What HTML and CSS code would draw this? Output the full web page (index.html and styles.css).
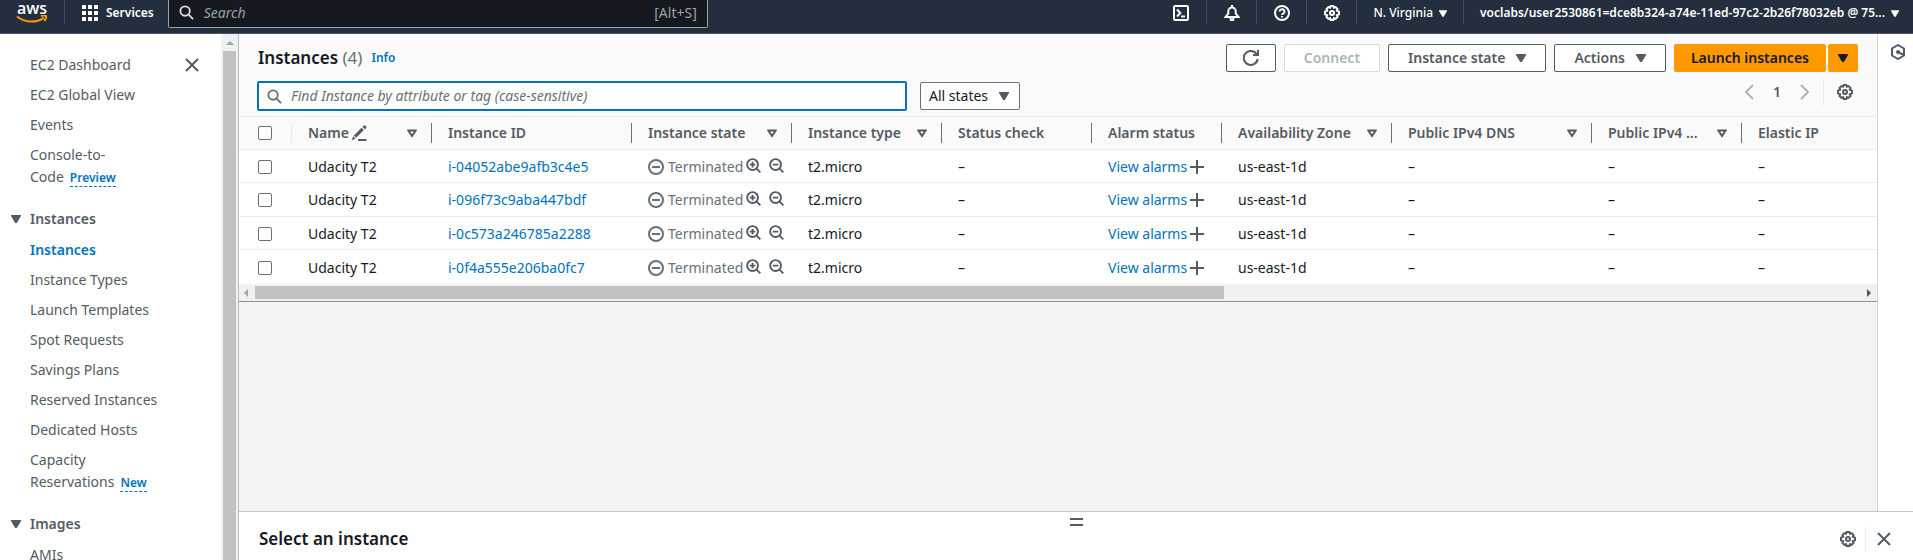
FILE: index.html
```html
<!DOCTYPE html>
<html lang="en">
<head>
<meta charset="utf-8">
<title>Instances | EC2</title>
<link rel="stylesheet" href="styles.css">
</head>
<body>
<svg class="sprite" aria-hidden="true">
  <symbol id="i-search" viewBox="0 0 16 16"><circle cx="6.5" cy="6.5" r="5" /><path d="M10.3 10.3 15 15"/></symbol>
  <symbol id="i-zoomin" viewBox="0 0 16 16"><circle cx="7" cy="7" r="5.8"/><path d="M11 11l4.300 4.300M4 7h6M7 4v6"/></symbol>
  <symbol id="i-zoomout" viewBox="0 0 16 16"><circle cx="7" cy="7" r="5.800"/><path d="M11 11l4.300 4.300M4 7h6"/></symbol>
  <symbol id="i-minus" viewBox="0 0 16 16"><circle cx="8" cy="8" r="7"/><path d="M4 8h8"/></symbol>
  <symbol id="i-plus" viewBox="0 0 16 16"><path d="M8 1v14M1 8h14"/></symbol>
  <symbol id="i-close" viewBox="0 0 16 16"><path d="M2 2l12 12M14 2L2 14"/></symbol>
  <symbol id="i-sort" viewBox="0 0 10 9"><path d="M1.300 1.500h7.400L5 7z"/></symbol>
  <symbol id="i-down" viewBox="0 0 10 8"><path class="solid" d="M0 0h10v1L5.800 8H4.200L0 1z"/></symbol>
  <symbol id="i-edit" viewBox="0 0 16 16"><path class="solid" d="M.6 15.400l1.600-4.200 2.400 2.300zM2.900 10.400l7.600-7.600 2.300 2.300-7.600 7.600zM11.500 1.900 12.900.500q.6-.5 1.200 0l1.200 1.200q.5.600 0 1.200L13.900 4.300z"/><path d="M7 15h8.500"/></symbol>
  <symbol id="i-gear" viewBox="0 0 16 16"><path d="M6.700 1h2.600l.6 1.700 1.700-.6 1.900 1.900-.7 1.700 2.200 1v2.600l-2.200.9.700 1.800-1.900 1.900-1.700-.7L9.300 15H6.700l-.6-1.800-1.700.7L2.500 12l.7-1.800L1 9.300V6.700l2.200-1L2.500 4l1.900-1.900 1.700.6z"/><circle cx="8" cy="8" r="2"/></symbol>
  <symbol id="i-refresh" viewBox="0 0 16 16"><path d="M14.700 9A7 7 0 1 1 13.600 4M15 0v5h-5"/></symbol>
  <symbol id="i-left" viewBox="0 0 9 16"><path d="M8 1L1 8l7 7"/></symbol>
  <symbol id="i-right" viewBox="0 0 9 16"><path d="M1 1l7 7-7 7"/></symbol>
  <symbol id="i-shell" viewBox="0 0 16 16"><rect x="1" y="1" width="14" height="14" rx="1"/><path d="M4 4.500 7.300 8 4 11.500M8 11.500h4"/></symbol>
  <symbol id="i-bell" viewBox="0 0 16 16"><path d="M8 0v2M1.500 12 4.300 8.500V6.200a3.700 3.700 0 0 1 7.400 0v2.300l2.800 3.500zM6.200 12.500 7 15h2l.8-2.500"/></symbol>
  <symbol id="i-help" viewBox="0 0 16 16"><circle cx="8" cy="8" r="7"/><path d="M5.500 6.500a2.500 2.300 0 1 1 4 1.900Q8 9 8 10M8 10.900v1.700"/></symbol>
  <symbol id="i-hex" viewBox="0 0 16 16"><path d="M8 1l6 3.500v7L8 15l-6-3.500v-7zM8 8l5.500 2.800"/><circle class="solid" cx="8" cy="8" r="2"/></symbol>
  <symbol id="i-apps" viewBox="0 0 16 16"><path class="solid" d="M0 0h4v4H0zM6 0h4v4H6zM12 0h4v4h-4zM0 6h4v4H0zM6 6h4v4H6zM12 6h4v4h-4zM0 12h4v4H0zM6 12h4v4H6zM12 12h4v4h-4z"/></symbol>
</svg>

<header class="topbar">
  <a class="logo" href="#" aria-label="AWS home">
    <span class="logo-text">aws</span>
    <svg class="logo-smile" viewBox="0 0 32 8"><path d="M1 1.500C9 8 20 8 28 2.800" /><path d="M25 1c2.500-.6 4.500-.5 5 0s0 3-1.500 5"/></svg>
  </a>
  <button class="services"><svg class="icon"><use href="#i-apps"/></svg>Services</button>
  <label class="global-search">
    <svg class="icon"><use href="#i-search"/></svg>
    <input type="search" placeholder="Search" aria-label="Search">
    <span>[Alt+S]</span>
  </label>
  <nav class="tools">
    <button aria-label="CloudShell"><svg class="icon"><use href="#i-shell"/></svg></button>
    <button aria-label="Notifications"><svg class="icon"><use href="#i-bell"/></svg></button>
    <button aria-label="Help"><svg class="icon"><use href="#i-help"/></svg></button>
    <button aria-label="Settings"><svg class="icon"><use href="#i-gear"/></svg></button>
    <button class="region">N. Virginia<svg class="caret small"><use href="#i-down"/></svg></button>
    <button class="account">voclabs/user2530861=dce8b324-a74e-11ed-97c2-2b26f78032eb @ 75...<svg class="caret small"><use href="#i-down"/></svg></button>
  </nav>
</header>

<div class="shell">
  <aside class="sidebar">
    <nav class="side-nav">
      <button class="side-close" aria-label="Close navigation"><svg class="icon"><use href="#i-close"/></svg></button>
      <ul>
        <li><a href="#">EC2 Dashboard</a></li>
        <li><a href="#">EC2 Global View</a></li>
        <li><a href="#">Events</a></li>
        <li><a href="#">Console-to-<br>Code</a><button class="tag">Preview</button></li>
      </ul>
      <button class="section"><svg class="caret"><use href="#i-down"/></svg>Instances</button>
      <ul>
        <li><a class="current" href="#">Instances</a></li>
        <li><a href="#">Instance Types</a></li>
        <li><a href="#">Launch Templates</a></li>
        <li><a href="#">Spot Requests</a></li>
        <li><a href="#">Savings Plans</a></li>
        <li><a href="#">Reserved Instances</a></li>
        <li><a href="#">Dedicated Hosts</a></li>
        <li><a href="#">Capacity<br>Reservations</a><button class="tag">New</button></li>
      </ul>
      <button class="section"><svg class="caret"><use href="#i-down"/></svg>Images</button>
      <ul>
        <li><a href="#">AMIs</a></li>
      </ul>
    </nav>
    <div class="vscroll"><i class="arrow up"></i><i class="vthumb"></i></div>
  </aside>

  <div class="work">
    <div class="upper">
      <main class="content">
        <section class="toolbar">
          <div class="title-row">
            <h1>Instances <span>(4)</span></h1>
            <a class="info" href="#">Info</a>
            <div class="actions">
              <button class="btn refresh" aria-label="Refresh"><svg class="icon"><use href="#i-refresh"/></svg></button>
              <button class="btn" disabled>Connect</button>
              <button class="btn">Instance state<svg class="caret"><use href="#i-down"/></svg></button>
              <button class="btn">Actions<svg class="caret"><use href="#i-down"/></svg></button>
              <div class="split">
                <button class="btn primary">Launch instances</button>
                <button class="btn primary more" aria-label="More launch options"><svg class="caret"><use href="#i-down"/></svg></button>
              </div>
            </div>
          </div>
          <div class="filter-row">
            <label class="filter">
              <svg class="icon"><use href="#i-search"/></svg>
              <input type="text" placeholder="Find Instance by attribute or tag (case-sensitive)" aria-label="Find Instance">
            </label>
            <div class="select">
              <select aria-label="State"><option>All states</option></select>
              <svg class="caret"><use href="#i-down"/></svg>
            </div>
            <div class="pager">
              <button class="dim" aria-label="Previous page"><svg class="chev"><use href="#i-left"/></svg></button>
              <button class="page">1</button>
              <button class="dim" aria-label="Next page"><svg class="chev"><use href="#i-right"/></svg></button>
              <button class="prefs" aria-label="Preferences"><svg class="icon"><use href="#i-gear"/></svg></button>
            </div>
          </div>
        </section>

        <table class="grid">
          <colgroup><col class="w-check"><col class="w-140"><col class="w-200"><col class="w-160"><col class="w-150"><col class="w-150"><col class="w-130"><col class="w-170"><col class="w-200"><col class="w-150"><col></colgroup>
          <thead>
            <tr>
              <th class="check"><div><input type="checkbox" aria-label="Select all"></div></th>
              <th><div>Name<svg class="icon edit"><use href="#i-edit"/></svg><svg class="sort"><use href="#i-sort"/></svg></div></th>
              <th><div>Instance ID</div></th>
              <th><div>Instance state<svg class="sort"><use href="#i-sort"/></svg></div></th>
              <th><div>Instance type<svg class="sort"><use href="#i-sort"/></svg></div></th>
              <th><div>Status check</div></th>
              <th><div>Alarm status</div></th>
              <th><div>Availability Zone<svg class="sort"><use href="#i-sort"/></svg></div></th>
              <th><div>Public IPv4 DNS<svg class="sort"><use href="#i-sort"/></svg></div></th>
              <th><div>Public IPv4 ...<svg class="sort"><use href="#i-sort"/></svg></div></th>
              <th class="last"><div>Elastic IP</div></th>
            </tr>
          </thead>
          <tbody>
            <tr>
              <td class="check"><input type="checkbox" aria-label="Select i-04052abe9afb3c4e5"></td>
              <td>Udacity T2</td><td><a href="#">i-04052abe9afb3c4e5</a></td>
              <td><div class="status"><svg class="icon"><use href="#i-minus"/></svg><span>Terminated</span><button aria-label="Include"><svg class="icon"><use href="#i-zoomin"/></svg></button><button aria-label="Exclude"><svg class="icon"><use href="#i-zoomout"/></svg></button></div></td>
              <td>t2.micro</td><td>–</td>
              <td><div class="alarm"><a href="#">View alarms</a><button aria-label="Add alarm"><svg class="icon"><use href="#i-plus"/></svg></button></div></td>
              <td>us-east-1d</td><td>–</td><td>–</td><td>–</td>
            </tr>
            <tr>
              <td class="check"><input type="checkbox" aria-label="Select i-096f73c9aba447bdf"></td>
              <td>Udacity T2</td><td><a href="#">i-096f73c9aba447bdf</a></td>
              <td><div class="status"><svg class="icon"><use href="#i-minus"/></svg><span>Terminated</span><button aria-label="Include"><svg class="icon"><use href="#i-zoomin"/></svg></button><button aria-label="Exclude"><svg class="icon"><use href="#i-zoomout"/></svg></button></div></td>
              <td>t2.micro</td><td>–</td>
              <td><div class="alarm"><a href="#">View alarms</a><button aria-label="Add alarm"><svg class="icon"><use href="#i-plus"/></svg></button></div></td>
              <td>us-east-1d</td><td>–</td><td>–</td><td>–</td>
            </tr>
            <tr>
              <td class="check"><input type="checkbox" aria-label="Select i-0c573a246785a2288"></td>
              <td>Udacity T2</td><td><a href="#">i-0c573a246785a2288</a></td>
              <td><div class="status"><svg class="icon"><use href="#i-minus"/></svg><span>Terminated</span><button aria-label="Include"><svg class="icon"><use href="#i-zoomin"/></svg></button><button aria-label="Exclude"><svg class="icon"><use href="#i-zoomout"/></svg></button></div></td>
              <td>t2.micro</td><td>–</td>
              <td><div class="alarm"><a href="#">View alarms</a><button aria-label="Add alarm"><svg class="icon"><use href="#i-plus"/></svg></button></div></td>
              <td>us-east-1d</td><td>–</td><td>–</td><td>–</td>
            </tr>
            <tr>
              <td class="check"><input type="checkbox" aria-label="Select i-0f4a555e206ba0fc7"></td>
              <td>Udacity T2</td><td><a href="#">i-0f4a555e206ba0fc7</a></td>
              <td><div class="status"><svg class="icon"><use href="#i-minus"/></svg><span>Terminated</span><button aria-label="Include"><svg class="icon"><use href="#i-zoomin"/></svg></button><button aria-label="Exclude"><svg class="icon"><use href="#i-zoomout"/></svg></button></div></td>
              <td>t2.micro</td><td>–</td>
              <td><div class="alarm"><a href="#">View alarms</a><button aria-label="Add alarm"><svg class="icon"><use href="#i-plus"/></svg></button></div></td>
              <td>us-east-1d</td><td>–</td><td>–</td><td>–</td>
            </tr>
          </tbody>
        </table>
        <div class="hscroll"><i class="arrow left"></i><div class="htrack"><i class="hthumb"></i></div><i class="arrow right"></i></div>
      </main>
      <aside class="rail"><button aria-label="Open tools"><svg class="icon"><use href="#i-hex"/></svg></button></aside>
    </div>
    <section class="panel">
      <div class="handle"></div>
      <div class="panel-row">
        <h2>Select an instance</h2>
        <button aria-label="Panel preferences"><svg class="icon"><use href="#i-gear"/></svg></button>
        <button class="panel-close" aria-label="Close panel"><svg class="icon"><use href="#i-close"/></svg></button>
      </div>
    </section>
  </div>
</div>
</body>
</html>
```

FILE: styles.css
```css
* { box-sizing: border-box; }

body {
  margin: 0;
  height: 100vh;
  display: flex;
  flex-direction: column;
  overflow: hidden;
  background: #fff;
  color: #16191f;
  font: 14px/22px "Noto Sans", "Open Sans", sans-serif;
}

button, input, select { font: inherit; color: inherit; }
button { display: flex; align-items: center; padding: 0; border: 0; background: none; }
a { color: #0073bb; text-decoration: none; }
h1, h2 { margin: 0; font-size: 17px; line-height: 22px; font-weight: 600; }
ul { margin: 0; padding: 0; list-style: none; }

.sprite { position: absolute; width: 0; height: 0; }
.icon, .chev, .sort, .logo-smile { fill: none; stroke: currentColor; stroke-width: 2; flex: none; }
.icon { width: 16px; height: 16px; }
.chev { width: 9px; height: 16px; }
.sort { width: 10px; height: 9px; }
.caret { width: 10px; height: 8px; flex: none; fill: currentColor; }
.caret.small { width: 8px; height: 7px; }
.solid { fill: currentColor; stroke: none; }

/* Top bar */
.topbar {
  flex: none;
  display: flex;
  align-items: flex-start;
  height: 34px;
  background: #232f3e;
  border-bottom: 1px solid #4f5766;
  color: #fff;
  font-size: 12px;
  font-weight: 600;
}
.logo {
  display: flex;
  flex-direction: column;
  align-items: center;
  width: 65px;
  height: 24px;
  border-right: 1px solid #414d5c;
  color: #fff;
}
.logo-text { font: 600 16px/17px "Open Sans", sans-serif; }
.logo-smile { width: 32px; height: 8px; margin-top: -2px; color: #ff9900; }
.services { gap: 8px; height: 26px; margin-left: 17px; }
.global-search {
  display: flex;
  align-items: center;
  gap: 10px;
  width: 540px;
  height: 28px;
  margin-left: 14px;
  padding: 0 10px 2px;
  background: #16191f;
  border: 1px solid #95a5a6;
  border-top: 0;
  border-radius: 0 0 2px 2px;
  color: #95a5a6;
  font-size: 14px;
  font-weight: 400;
}
.global-search .icon { color: #d5dbdb; width: 15px; height: 15px; }
.global-search input { flex: 1; min-width: 0; border: 0; padding: 0; background: none; outline: 0; }
.global-search input::placeholder { color: #95a5a6; font-style: italic; }
.tools { display: flex; margin-left: auto; }
.tools button { justify-content: center; width: 50px; height: 24px; padding-top: 2px; border-left: 1px solid #414d5c; }
.tools button:first-child { border-left: 0; }
.tools .region { width: auto; padding: 2px 16px 0; gap: 6px; font-weight: 500; }
.tools .account { width: auto; padding: 2px 14px 0 16px; gap: 6px; font-weight: 600; }

/* Sidebar */
.shell { flex: 1; min-height: 0; display: flex; }
.sidebar { flex: none; display: flex; width: 239px; border-right: 1px solid #b7bec0; color: #545b64; overflow: hidden; }
.side-nav { flex: 1; position: relative; padding: 20px 0 0 30px; }
.side-close { position: absolute; top: 23px; right: 21px; color: #545b64; }
.side-nav li { margin-bottom: 8px; }
.side-nav a { color: #545b64; }
.side-nav a.current { color: #0073bb; font-weight: 600; }
.side-nav .tag { display: inline-block; margin-left: 6px; border-bottom: 1px dashed #0073bb; color: #0073bb; font-size: 12px; line-height: 16px; font-weight: 600; }
.section { gap: 9px; margin: 20px 0 9px -19px; font-weight: 600; line-height: 22px; }
.vscroll { width: 17px; display: flex; flex-direction: column; align-items: center; background: #f0f0f0; }
.vthumb { flex: 1; width: 13px; margin-top: 6px; background: #c1c1c1; }
.arrow { flex: none; width: 0; height: 0; border: 4px solid transparent; }
.arrow.up { margin-top: 3px; border-bottom-color: #a3a3a3; }
.arrow.left { margin-right: 7px; border-right-color: #a3a3a3; }
.arrow.right { margin-left: 7px; border-left-color: #505050; }

/* Work area */
.work { flex: 1; min-width: 0; display: flex; flex-direction: column; }
.upper { flex: 1; min-height: 0; display: flex; }
.content { flex: 1; min-width: 0; background: #f2f3f3; border-right: 1px solid #d0d5d5; }
.rail { width: 35px; display: flex; justify-content: center; align-items: flex-start; padding: 10px 0 0 5px; color: #545b64; }

.toolbar { padding: 10px 19px 5px 18px; background: #fafafa; border-bottom: 1px solid #eaeded; }
.title-row, .actions, .split, .pager { display: flex; align-items: center; }
h1 span { color: #687078; font-weight: 400; }
.title-row { padding-left: 1px; }
.info { margin-left: 9px; font-size: 12px; font-weight: 600; }
.actions { gap: 8px; margin-left: auto; color: #545b64; }
.btn {
  gap: 11px;
  height: 28px;
  padding: 0 19px;
  background: #fff;
  border: 1px solid #545b64;
  border-radius: 2px;
  font-weight: 600;
  white-space: nowrap;
}
.btn:disabled { border-color: #d5dbdb; color: #aab7b8; }
.btn.refresh { padding: 0 16px; }
.split { gap: 2px; }
.btn.primary { padding: 0 16px; background: #ff9900; border-color: #ff9900; color: #16191f; }
.btn.more { padding: 0 9px; }
.filter-row { display: flex; align-items: flex-end; height: 33px; margin-top: 6px; }
.filter {
  display: flex;
  align-items: center;
  gap: 9px;
  width: 650px;
  height: 30px;
  padding: 0 8px;
  background: #fff;
  border: 2px solid #0073bb;
  border-radius: 2px;
  color: #687078;
}
.filter .icon { width: 15px; height: 15px; }
.filter input { flex: 1; min-width: 0; padding: 0; border: 0; outline: 0; background: none; }
.filter input::placeholder { color: #687078; font-style: italic; }
.select { display: grid; align-items: center; margin: 0 0 1px 13px; }
.select > * { grid-area: 1 / 1; }
.select select { appearance: none; width: 100px; height: 28px; padding: 0 8px; background: #fff; border: 1px solid #687078; border-radius: 2px; }
.select .caret { justify-self: end; margin-right: 11px; color: #545b64; pointer-events: none; }
.pager { align-self: flex-start; margin: 0 5px 0 auto; color: #545b64; }
.pager .dim { color: #aab7b8; }
.pager .page { justify-content: center; width: 46px; font-weight: 600; }
.prefs { height: 28px; margin-left: 14px; padding-left: 13px; border-left: 1px solid #eaeded; }

/* Instances table */
.grid { width: 100%; table-layout: fixed; border-collapse: separate; border-spacing: 0; background: #fff; }
.w-check { width: 53px; }
.w-130 { width: 130px; }
.w-140 { width: 140px; }
.w-150 { width: 150px; }
.w-160 { width: 160px; }
.w-170 { width: 170px; }
.w-200 { width: 200px; }
.grid th, .grid td { padding: 0 0 0 16px; text-align: left; white-space: nowrap; border-bottom: 1px solid #eaeded; }
.grid th { height: 33px; padding: 0; background: #fafafa; color: #545b64; font-weight: 600; }
.grid th div { display: flex; align-items: center; height: 20px; padding: 0 14px 0 16px; border-right: 1px solid #687078; }
.grid th.last div { border-right: 0; }
.grid th.check div { padding: 0; border-right-color: #eaeded; }
.grid .sort { margin-left: auto; }
.grid .edit { margin-left: 2px; }
.grid td { padding-top: 1px; }
.grid tbody tr { height: 33px; }
.grid tbody tr:nth-child(even) { height: 34px; }
.grid tbody tr:last-child td { border-bottom: 0; }
.grid .check { padding-left: 19px; }
.check input {
  display: block;
  appearance: none;
  width: 14px;
  height: 14px;
  margin: 0;
  background: #fff;
  border: 1px solid #687078;
  border-radius: 2px;
}
.status { display: flex; align-items: center; color: #687078; }
.status span { margin: 0 3px 0 4px; }
.status button { margin-right: 8px; padding-bottom: 3px; color: #545b64; }
.status button .icon { width: 15px; height: 15px; }
.alarm { display: flex; align-items: center; gap: 2px; }
.alarm button { color: #545b64; }
.hscroll { display: flex; align-items: center; height: 18px; padding: 0 2px 0 1px; background: #f0f0f0; border-bottom: 1px solid #879596; }
.htrack { flex: 1; }
.hthumb { display: block; width: 60.4%; height: 13px; background: #c1c1c1; }

/* Bottom split panel */
.panel { flex: none; height: 49px; border-top: 1px solid #c3c8c9; background: #fff; }
.handle { width: 13px; height: 8px; margin: 6px auto 0; border: solid #545b64; border-width: 2px 0; }
.panel-row { display: flex; align-items: center; height: 24px; margin-top: 1px; padding: 0 21px 0 20px; color: #545b64; }
.panel-row h2 { margin-right: auto; color: #16191f; }
.panel-close { height: 24px; margin-left: 9px; padding-left: 10px; border-left: 1px solid #eaeded; }
```
